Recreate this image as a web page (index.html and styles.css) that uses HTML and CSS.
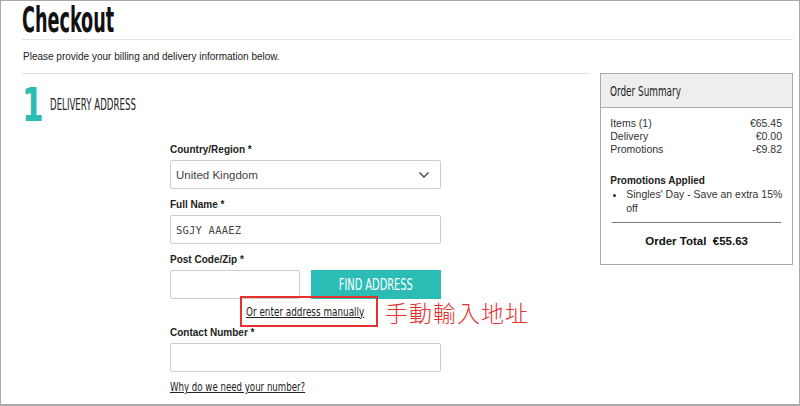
FILE: index.html
```html
<!DOCTYPE html>
<html>
<head>
<meta charset="utf-8">
<link rel="stylesheet" href="styles.css">
</head>
<body>
<div class="frame">
  <div class="header"><h1 class="title"><span class="sq sq-title">Checkout</span></h1></div>
  <p class="intro">Please provide your billing and delivery information below.</p>
  <div class="layout">
    <div class="main">
      <div class="step">
        <span class="step-num"><span class="sq sq-num">1</span></span>
        <span class="step-title"><span class="sq sq-step">DELIVERY ADDRESS</span></span>
      </div>
      <div class="form">
        <div class="field">
          <label class="label">Country/Region *</label>
          <div class="select">
            <span>United Kingdom</span>
            <svg class="chev" width="12" height="8" viewBox="0 0 12 8"><path d="M1.5 1.5 L6 6 L10.5 1.5" fill="none" stroke="#444" stroke-width="1.4"/></svg>
          </div>
        </div>
        <div class="field">
          <label class="label">Full Name *</label>
          <div class="input mono">SGJY AAAEZ</div>
        </div>
        <div class="field">
          <label class="label">Post Code/Zip *</label>
          <div class="row">
            <div class="input postcode"></div>
            <div class="btn"><span class="sq sq-btn">FIND ADDRESS</span></div>
          </div>
        </div>
        <div class="manual">
          <div class="redbox"><a class="link"><span class="sq sq-link">Or enter address manually</span></a></div>
          <span class="note">手動輸入地址</span>
        </div>
        <div class="field contact">
          <label class="label">Contact Number *</label>
          <div class="input"></div>
        </div>
        <a class="link why"><span class="sq sq-why">Why do we need your number?</span></a>
      </div>
    </div>
    <div class="summary">
      <div class="sum-head"><span class="sq sq-head">Order Summary</span></div>
      <div class="sum-body">
        <div class="sum-row"><span>Items (1)</span><span>€65.45</span></div>
        <div class="sum-row"><span>Delivery</span><span>€0.00</span></div>
        <div class="sum-row"><span>Promotions</span><span>-€9.82</span></div>
        <div class="promo-title">Promotions Applied</div>
        <ul class="promo-list"><li>Singles' Day - Save an extra 15% off</li></ul>
        <div class="total">Order Total&nbsp;&nbsp;€55.63</div>
      </div>
    </div>
  </div>
</div>
</body>
</html>
```
FILE: styles.css
```css
* { box-sizing: border-box; }
html, body { margin: 0; padding: 0; background: #fff; }
body { font-family: "Liberation Sans", Arial, sans-serif; color: #222; }
.frame {
  width: 800px; height: 406px; overflow: hidden;
  border: 1px solid #a9a9a9; border-bottom-width: 2px;
  padding: 0 6px 0 21px;
}
.sq {
  display: inline-block; white-space: nowrap;
  font-family: "DejaVu Sans", sans-serif; font-stretch: condensed;
  transform-origin: left center;
}
.sq-title { transform: scaleX(0.56); }
.sq-num { transform: scaleX(0.75); }
.sq-step { transform: scaleX(0.64); }
.sq-btn { transform: scaleX(0.73); transform-origin: center center; }
.sq-link { transform: scaleX(0.8); }
.sq-why { transform: scaleX(0.78); }
.sq-head { transform: scaleX(0.68); }

.header { border-bottom: 1px solid #e3e3e3; height: 39px; }
.title {
  margin: 0; padding-top: 1px;
  font-size: 35px; line-height: 36px; font-weight: bold; color: #111;
}
.intro { margin: 0; height: 33px; font-size: 10px; line-height: 33px; padding-left: 1px; color: #222; }
.layout { display: flex; align-items: flex-start; }
.main { width: 569px; border-top: 1px solid #e3e3e3; }
.step { display: flex; align-items: center; height: 60px; padding-top: 1px; }
.step-num {
  font-weight: bold; font-size: 46px; color: #2bbdb5; width: 28px; line-height: 50px; padding-left: 0;
}
.step-title { font-size: 15px; color: #222; line-height: 20px; }
.form { margin-left: 148px; width: 271px; padding-top: 9px; }
.field { margin-bottom: 9px; }
.label { display: block; font-size: 10px; font-weight: bold; line-height: 14px; margin-bottom: 3px; color: #222; }
.select, .input {
  height: 29px; border: 1px solid #ccc; border-radius: 2px; background: #fff;
  display: flex; align-items: center; padding: 0 9px 0 5px;
  font-size: 11.5px; color: #444;
}
.select { justify-content: space-between; }
.chev { margin-right: 1px; }
.mono { font-family: "DejaVu Sans Mono", monospace; font-size: 10.5px; letter-spacing: 0.2px; }
.row { display: flex; justify-content: space-between; }
.postcode { width: 130px; }
.btn {
  width: 130px; height: 29px; background: #2bbdb5; color: #fff;
  display: flex; align-items: center; justify-content: center;
  font-size: 15px; line-height: 20px;
}
.manual { display: flex; align-items: center; margin: -12px 0 0 70px; height: 31px; white-space: nowrap; }
.redbox {
  width: 138px; height: 31px; border: 2px solid #e6312f; flex: none;
  display: flex; align-items: center; padding-left: 4px;
}
.link { font-size: 12.3px; color: #222; text-decoration: underline; line-height: 16px; }
.link .sq { text-decoration: underline; }
.note {
  margin-left: 7px; margin-top: 2px;
  font-family: "Noto Sans CJK TC", sans-serif; font-weight: 300;
  font-size: 23px; color: #e6312f; letter-spacing: 1px; line-height: 31px;
}
.contact { margin-top: -1px; }
.why { display: block; margin-top: -2px; }
.summary { width: 193px; margin-left: 10px; border: 1px solid #aaa; }
.sum-head {
  height: 34px; background: #eee; border-bottom: 1px solid #aaa;
  display: flex; align-items: center; padding-left: 9px;
  font-size: 14.5px; color: #1a1a1a;
}
.sum-body { padding: 9px 10px 15px 9px; font-size: 10.5px; color: #333; }
.sum-row { display: flex; justify-content: space-between; line-height: 13px; }
.promo-title { font-weight: bold; margin-top: 18px; line-height: 13px; color: #222; font-size: 10px; }
.promo-list { margin: 0 -6px 0 0; padding: 0 0 0 16px; line-height: 14px; }
.total {
  margin: 7px 1px 0 2px; border-top: 1px solid #777; padding-top: 11px;
  text-align: center; font-weight: bold; font-size: 11.5px; color: #111; line-height: 15px;
}
```
